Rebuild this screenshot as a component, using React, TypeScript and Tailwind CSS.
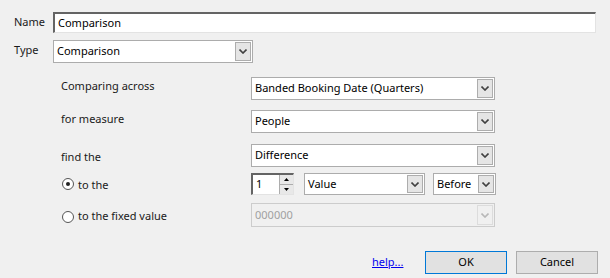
import React from "react";

const Chevron = ({ disabled = false }: { disabled?: boolean }) => (
  <svg width="8" height="5" viewBox="0 0 8 5">
    <path
      d="M0.5 0.5 L4 4 L7.5 0.5"
      fill="none"
      stroke={disabled ? "#b8b8b8" : "#404040"}
      strokeWidth="1.6"
    />
  </svg>
);

type ComboProps = {
  value: string;
  width: string;
  height?: string;
  disabled?: boolean;
};

const Combo: React.FC<ComboProps> = ({ value, width, height = "h-[23px]", disabled = false }) => (
  <div
    className={`${width} ${height} flex items-stretch border ${
      disabled ? "border-[#cccccc] bg-[#f0f0f0]" : "border-[#acacac] bg-white"
    }`}
  >
    <span
      className={`flex-1 flex items-center pl-[3px] truncate ${
        disabled ? "text-[#a0a0a0]" : "text-[#000000]"
      }`}
    >
      {value}
    </span>
    <div
      className={`w-[16px] my-px mr-px flex items-center justify-center border ${
        disabled ? "border-[#dcdcdc] bg-[#f0f0f0]" : "border-[#adadad] bg-[#e5e5e5]"
      }`}
    >
      <Chevron disabled={disabled} />
    </div>
  </div>
);

const Radio = ({ checked }: { checked: boolean }) => (
  <div className="w-[12px] h-[12px] rounded-full border border-[#555555] bg-white flex items-center justify-center">
    {checked && <div className="w-[4px] h-[4px] rounded-full bg-[#222222]" />}
  </div>
);

const Spinner = () => (
  <div className="w-[43px] h-[22px] flex border-t-2 border-l-2 border-t-[#646464] border-l-[#646464] border-r border-b border-r-[#e3e3e3] border-b-[#e3e3e3] bg-white">
    <span className="flex-1 flex items-center pl-[3px] text-black">1</span>
    <div className="w-[14px] flex flex-col border-l border-[#adadad]">
      <div className="flex-1 flex items-center justify-center bg-[#e8e8e8] border-b border-[#adadad]">
        <svg width="5" height="3" viewBox="0 0 5 3">
          <path d="M0 3 L2.5 0 L5 3 Z" fill="#000" />
        </svg>
      </div>
      <div className="flex-1 flex items-center justify-center bg-[#e8e8e8]">
        <svg width="5" height="3" viewBox="0 0 5 3">
          <path d="M0 0 L2.5 3 L5 0 Z" fill="#000" />
        </svg>
      </div>
    </div>
  </div>
);

export default function App() {
  return (
    <div
      className="w-[610px] h-[278px] bg-[#f0f0f0] text-[11px] text-[#1a1a1a] overflow-hidden"
      style={{ fontFamily: '"Noto Sans", "Open Sans", Arial, sans-serif' }}
    >
      {/* Name */}
      <div className="flex items-center pt-[12px]">
        <span className="w-[53px] pl-[14px]">Name</span>
        <div className="w-[543px] h-[21px] flex items-center pl-[3px] bg-white border-t-2 border-l-2 border-t-[#646464] border-l-[#646464] border-r border-b border-r-[#e3e3e3] border-b-[#e3e3e3] text-black">
          Comparison
        </div>
      </div>

      {/* Type */}
      <div className="flex items-center mt-[7px]">
        <span className="w-[53px] pl-[14px] -mt-[2px]">Type</span>
        <Combo value="Comparison" width="w-[200px]" />
      </div>

      {/* Comparison options */}
      <div className="pl-[61px] mt-[14px] flex flex-col">
        <div className="flex items-center">
          <span className="w-[190px] -mt-[4px]">Comparing across</span>
          <Combo value="Banded Booking Date (Quarters)" width="w-[244px]" />
        </div>
        <div className="flex items-center mt-[10px]">
          <span className="w-[190px] -mt-[4px]">for measure</span>
          <Combo value="People" width="w-[244px]" />
        </div>
        <div className="flex items-center mt-[11px]">
          <span className="w-[190px] mt-[3px]">find the</span>
          <Combo value="Difference" width="w-[244px]" />
        </div>
        <div className="flex items-center mt-[6px]">
          <div className="w-[190px] flex items-center">
            <div className="ml-[1px]">
              <Radio checked />
            </div>
            <span className="ml-[4px] mt-[2px]">to the</span>
          </div>
          <Spinner />
          <div className="ml-[10px]">
            <Combo value="Value" width="w-[121px]" height="h-[22px]" />
          </div>
          <div className="ml-[8px]">
            <Combo value="Before" width="w-[63px]" height="h-[22px]" />
          </div>
        </div>
        <div className="flex items-center mt-[8px]">
          <div className="w-[190px] flex items-center mt-[3px]">
            <div className="ml-[1px]">
              <Radio checked={false} />
            </div>
            <span className="ml-[4px]">to the fixed value</span>
          </div>
          <Combo value="000000" width="w-[244px]" height="h-[24px]" disabled />
        </div>
      </div>

      {/* Buttons */}
      <div className="flex items-center mt-[24px] pl-[372px]">
        <a href="#" className="text-[#0000ee] underline w-[53px]">
          help...
        </a>
        <button className="w-[82px] h-[23px] border border-[#0078d7] bg-[#e1e1e1] text-black">OK</button>
        <button className="ml-[9px] w-[82px] h-[23px] border border-[#adadad] bg-[#e1e1e1] text-black">Cancel</button>
      </div>
    </div>
  );
}
